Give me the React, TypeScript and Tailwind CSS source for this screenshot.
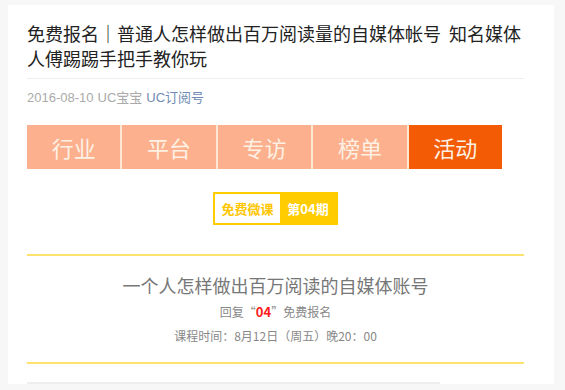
const tabs = ['行业', '平台', '专访', '榜单', '活动'];

export default function App() {
  return (
    <div className="w-[565px] h-[390px] bg-[#f7f7f7] pt-[5px] pl-[8px] overflow-hidden font-['Noto_Sans_CJK_SC',sans-serif]">
      <div className="w-[546px] h-[379px] bg-white pl-[19px] pr-[30px] pt-[16px]">
        <h1 className="text-[18px] leading-[25px] text-[#222] font-normal">
          免费报名｜普通人怎样做出百万阅读量的自媒体帐号&nbsp;&nbsp;知名媒体人傅踢踢手把手教你玩
        </h1>
        <div className="h-px bg-[#eeeeee] mt-[7px]" />
        <div className="mt-[9px] flex items-center gap-[4px] text-[13px] leading-[20px] text-[#aaa] font-['Liberation_Sans','Noto_Sans_CJK_SC',sans-serif]">
          <span>2016-08-10</span>
          <span>UC宝宝</span>
          <span className="text-[#6f8bb3]">UC订阅号</span>
        </div>

        <div className="mt-[17px] flex w-[475px] h-[44px] bg-[#fbe7d3] gap-[2px]">
          {tabs.map((t, i) => (
            <div
              key={t}
              className={
                i === 4
                  ? 'flex-1 flex items-center justify-center bg-[#f35b04] text-[#fdf1e4] text-[22px]'
                  : 'flex-1 flex items-center justify-center bg-[#fcb08d] text-[#fdf1e4] text-[22px]'
              }
            >
              {t}
            </div>
          ))}
        </div>

        <div className="mt-[23px] flex justify-center">
          <div className="flex h-[33px] border-2 border-[#ffcc00] text-[13px] font-bold">
            <div className="w-[65px] flex items-center justify-center bg-white text-[#ffc600]">免费微课</div>
            <div className="w-[56px] flex items-center justify-center bg-[#ffcc00] text-white">第04期</div>
          </div>
        </div>

        <div className="mt-[29px] h-[2px] bg-[#ffe26e]" />
        <div className="pt-[16px] text-center text-[#777]">
          <div className="text-[18px] leading-[26px]">一个人怎样做出百万阅读的自媒体账号</div>
          <div className="mt-[6px] text-[12px] leading-[16px] text-[#888]">
            回复“<span className="text-[#ff1a1a] font-bold text-[13px]">04</span>”免费报名
          </div>
          <div className="mt-[8px] text-[12px] leading-[16px] text-[#888]">课程时间：8月12日（周五）晚20：00</div>
        </div>
        <div className="mt-[18px] h-[2px] bg-[#ffe26e]" />
        <div className="mt-[18px] w-[413px] h-[2px] bg-[#eeeeee]" />
      </div>
    </div>
  );
}
